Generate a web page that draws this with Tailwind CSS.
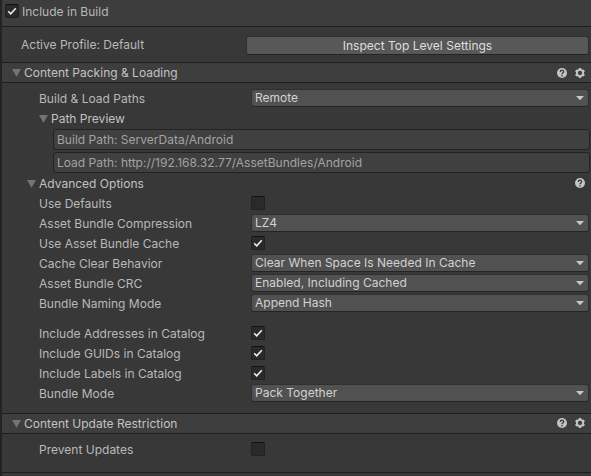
<!DOCTYPE html>
<html lang="en">
<head>
<meta charset="utf-8">
<title>Inspector</title>
<script src="https://cdn.jsdelivr.net/npm/@tailwindcss/browser@4"></script>
</head>
<body class="bg-[#383838]">
<svg class="hidden">
  <symbol id="check" viewBox="0 0 14 14"><path d="M3.2 7.3 5.7 9.8 10.8 4.2" fill="none" stroke="#ececec" stroke-width="1.6"/></symbol>
  <symbol id="fold" viewBox="0 0 10 8"><path d="M0 0h9L4.5 7.8z" fill="#747474"/></symbol>
  <symbol id="caret" viewBox="0 0 8 4"><path d="M0 0h8L4 4.3z" fill="#c8c8c8"/></symbol>
  <symbol id="help" viewBox="0 0 10 10"><circle cx="5" cy="5" r="5" fill="#c4c4c4"/><path d="M3.3 3.9C3.3 1.7 6.7 1.7 6.7 3.8 6.7 4.9 5 4.9 5 6.3M5 7.1v1.3" fill="none" stroke="#3e3e3e" stroke-width="1.3"/></symbol>
  <symbol id="gear" viewBox="0 0 10 10"><g stroke="#c4c4c4" fill="none"><circle cx="5" cy="5" r="3.1" stroke-width="1.9"/><path stroke-width="2.4" d="M5 0v1.8M5 8.2V10M.67 2.5l1.56.9M7.77 6.6l1.56.9M.67 7.5l1.56-.9M7.77 3.4l1.56-.9"/></g></symbol>
</svg>
<main class="w-[591px] h-[476px] overflow-hidden flex flex-col border-l-2 border-[#232323] bg-[#383838] text-[#b8b8b8] text-[12px] leading-[20px] tracking-[0.01px] whitespace-nowrap font-['Inter',sans-serif]">
  <header class="h-[27px] shrink-0 bg-[#3d3d3d] border-b border-[#1e1e1e] flex items-start pt-[2px] pl-[3px] gap-[3px]">
    <span class="mt-[2px] w-[14px] h-[14px] rounded-[2px] bg-[#2a2a2a] border border-[#212121] border-t-[#111]"><svg class="w-[14px] h-[14px] -m-px"><use href="#check"/></svg></span>
    <span>Include in Build</span>
  </header>
  <section class="h-[36px] shrink-0 border-b border-[#1e1e1e] flex items-center pl-[19px] pt-[2px] pr-[2px]">
    <span class="w-[225px] pb-px">Active Profile: Default</span>
    <button class="flex-1 h-[19px] rounded-[3px] bg-[#585858] border border-[#303030] border-b-[#242424] text-[#dedede] leading-[17px] text-center">Inspect Top Level Settings</button>
  </section>
  <header class="h-[20px] shrink-0 bg-[#3e3e3e] border-b border-[#1e1e1e] flex items-center pl-[10px] pr-[6px] text-[#c2c2c2]">
    <svg class="w-[10px] h-[8px] mr-[2px] mt-px"><use href="#fold"/></svg><span class="flex-1 pt-px">Content Packing &amp; Loading</span>
    <svg class="w-[10px] h-[10px] mr-[8px]"><use href="#help"/></svg><svg class="w-[10px] h-[10px]"><use href="#gear"/></svg>
  </header>
  <section class="h-[331px] shrink-0 border-b border-[#1e1e1e] pt-[5px]">
    <div class="h-[20px] flex items-center pl-[37px] pr-[2px]"><span class="w-[212px] pt-[2px]">Build &amp; Load Paths</span><div class="flex-1 h-[18px] rounded-[3px] bg-[#515151] border border-[#303030] border-b-[#242424] flex items-center pl-[3px] pr-[4px] text-[#d2d2d2]"><span class="flex-1">Remote</span><svg class="w-[8px] h-[4px]"><use href="#caret"/></svg></div></div>
    <div class="h-[20px] flex items-center pl-[37px] text-[#c2c2c2]"><svg class="w-[10px] h-[8px] mr-[2px] mt-px"><use href="#fold"/></svg><span class="pt-[2px]">Path Preview</span></div>
    <div class="h-[45px] pt-px pl-[51px] pr-px flex flex-col gap-[2px] text-[#a2a2a2]">
      <div class="h-[21px] rounded-[3px] border border-[#222] bg-[#404040] pl-[3px]">Build Path: ServerData/Android</div>
      <div class="h-[21px] rounded-[3px] border border-[#222] bg-[#404040] pl-[3px]">Load Path: http://192.168.32.77/AssetBundles/Android</div>
    </div>
    <div class="h-[20px] flex items-center pl-[25px] pr-[6px] text-[#c2c2c2]"><svg class="w-[10px] h-[8px] mr-[2px] mt-px"><use href="#fold"/></svg><span class="flex-1 pt-[2px]">Advanced Options</span><svg class="w-[10px] h-[10px] -mt-px"><use href="#help"/></svg></div>
    <div class="h-[20px] flex items-center pl-[37px]"><span class="w-[212px] pt-[2px]">Use Defaults</span><span class="w-[14px] h-[14px] rounded-[2px] bg-[#2a2a2a] border border-[#212121] border-t-[#111]"></span></div>
    <div class="h-[20px] flex items-center pl-[37px] pr-[2px]"><span class="w-[212px] pt-[2px]">Asset Bundle Compression</span><div class="flex-1 h-[18px] rounded-[3px] bg-[#515151] border border-[#303030] border-b-[#242424] flex items-center pl-[3px] pr-[4px] text-[#d2d2d2]"><span class="flex-1">LZ4</span><svg class="w-[8px] h-[4px]"><use href="#caret"/></svg></div></div>
    <div class="h-[20px] flex items-center pl-[37px]"><span class="w-[212px] pt-[2px]">Use Asset Bundle Cache</span><span class="w-[14px] h-[14px] rounded-[2px] bg-[#2a2a2a] border border-[#212121] border-t-[#111]"><svg class="w-[14px] h-[14px] -m-px"><use href="#check"/></svg></span></div>
    <div class="h-[20px] flex items-center pl-[37px] pr-[2px]"><span class="w-[212px] pt-[2px]">Cache Clear Behavior</span><div class="flex-1 h-[18px] rounded-[3px] bg-[#515151] border border-[#303030] border-b-[#242424] flex items-center pl-[3px] pr-[4px] text-[#d2d2d2]"><span class="flex-1">Clear When Space Is Needed In Cache</span><svg class="w-[8px] h-[4px]"><use href="#caret"/></svg></div></div>
    <div class="h-[20px] flex items-center pl-[37px] pr-[2px]"><span class="w-[212px] pt-[2px]">Asset Bundle CRC</span><div class="flex-1 h-[18px] rounded-[3px] bg-[#515151] border border-[#303030] border-b-[#242424] flex items-center pl-[3px] pr-[4px] text-[#d2d2d2]"><span class="flex-1">Enabled, Including Cached</span><svg class="w-[8px] h-[4px]"><use href="#caret"/></svg></div></div>
    <div class="h-[20px] mb-[10px] flex items-center pl-[37px] pr-[2px]"><span class="w-[212px] pt-[2px]">Bundle Naming Mode</span><div class="flex-1 h-[18px] rounded-[3px] bg-[#515151] border border-[#303030] border-b-[#242424] flex items-center pl-[3px] pr-[4px] text-[#d2d2d2]"><span class="flex-1">Append Hash</span><svg class="w-[8px] h-[4px]"><use href="#caret"/></svg></div></div>
    <div class="h-[20px] flex items-center pl-[37px]"><span class="w-[212px] pt-[2px]">Include Addresses in Catalog</span><span class="w-[14px] h-[14px] rounded-[2px] bg-[#2a2a2a] border border-[#212121] border-t-[#111]"><svg class="w-[14px] h-[14px] -m-px"><use href="#check"/></svg></span></div>
    <div class="h-[20px] flex items-center pl-[37px]"><span class="w-[212px] pt-[2px]">Include GUIDs in Catalog</span><span class="w-[14px] h-[14px] rounded-[2px] bg-[#2a2a2a] border border-[#212121] border-t-[#111]"><svg class="w-[14px] h-[14px] -m-px"><use href="#check"/></svg></span></div>
    <div class="h-[20px] flex items-center pl-[37px]"><span class="w-[212px] pt-[2px]">Include Labels in Catalog</span><span class="w-[14px] h-[14px] rounded-[2px] bg-[#2a2a2a] border border-[#212121] border-t-[#111]"><svg class="w-[14px] h-[14px] -m-px"><use href="#check"/></svg></span></div>
    <div class="h-[20px] flex items-center pl-[37px] pr-[2px]"><span class="w-[212px] pt-[2px]">Bundle Mode</span><div class="flex-1 h-[18px] rounded-[3px] bg-[#515151] border border-[#303030] border-b-[#242424] flex items-center pl-[3px] pr-[4px] text-[#d2d2d2]"><span class="flex-1">Pack Together</span><svg class="w-[8px] h-[4px]"><use href="#caret"/></svg></div></div>
  </section>
  <header class="h-[20px] shrink-0 bg-[#3e3e3e] border-b border-[#1e1e1e] flex items-center pl-[10px] pr-[6px] text-[#c2c2c2]">
    <svg class="w-[10px] h-[8px] mr-[2px] mt-px"><use href="#fold"/></svg><span class="flex-1 pt-px">Content Update Restriction</span>
    <svg class="w-[10px] h-[10px] mr-[8px] -mt-px"><use href="#help"/></svg><svg class="w-[10px] h-[10px] -mt-px"><use href="#gear"/></svg>
  </header>
  <section class="h-[39px] shrink-0 border-b border-[#1e1e1e] pt-[5px]">
    <div class="h-[20px] flex items-center pl-[37px]"><span class="w-[212px] pt-[2px]">Prevent Updates</span><span class="w-[14px] h-[14px] rounded-[2px] bg-[#2a2a2a] border border-[#212121] border-t-[#111]"></span></div>
  </section>
</main>
</body>
</html>
